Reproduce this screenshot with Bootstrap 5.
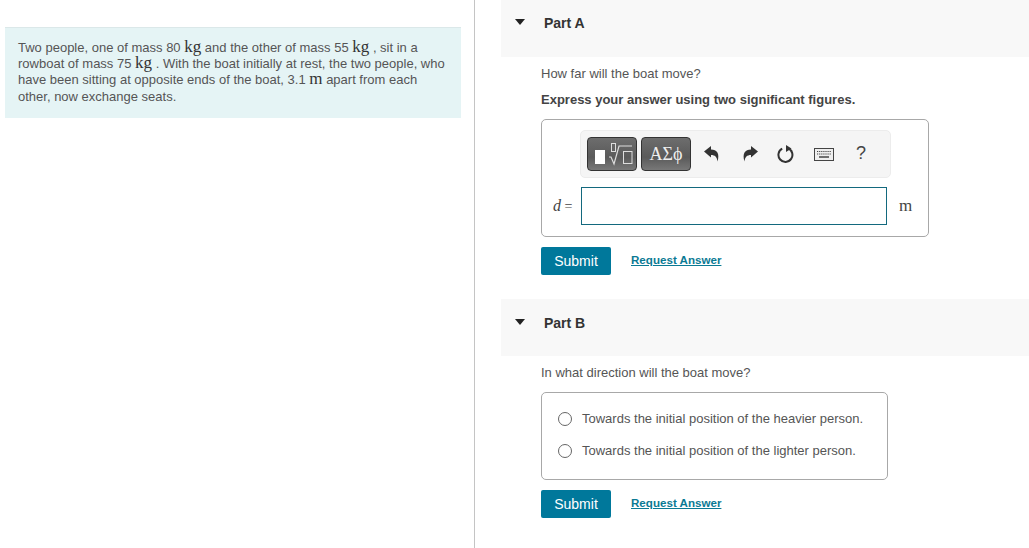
<!DOCTYPE html>
<html lang="en">
<head>
<meta charset="utf-8">
<title>Part A and B</title>
<link href="https://cdn.jsdelivr.net/npm/bootstrap@5.3.0/dist/css/bootstrap.min.css" rel="stylesheet">
<style>
html,body{height:548px;overflow:hidden;background:#fff}
body{font-family:"Liberation Sans",Arial,sans-serif;font-size:13px;line-height:16px;color:#555}
.pane-left{width:475px;height:548px;border-right:1px solid #c4c4c4;padding:27px 13px 0 5px;flex:none}
.intro-box{background:#e5f4f5;border-top:1px solid #dbe8e9;height:91px;padding:12px 13px 0;width:456px}
.intro-box p{margin:0;font-size:13px;line-height:16.2px}
.unit-big{font-family:"Liberation Serif",serif;font-size:17px;line-height:0;color:#333}
.pane-right{width:554px;padding-left:26px;flex:none}
.part-band{background:#f8f8f8;height:57px;display:flex;align-items:flex-start;padding:15px 0 0 14px;font-size:14px;font-weight:700;color:#333;gap:19px;line-height:16px}
.caret-down{width:0;height:0;border-left:5.5px solid transparent;border-right:5.5px solid transparent;border-top:6px solid #222;margin-top:4px;display:block}
.part-body{padding-left:40px}
.q-text{margin:9px 0 0;height:16px}
.a-text{margin:10px 0 0;font-weight:700;color:#444}
.answer-box{width:388px;height:118px;border:1px solid #a8a8a8;border-radius:5px;margin-top:11px;padding:10px 0 0 0}
.math-bar{margin-left:38px;width:311px;height:48px;background:#f5f5f5;border:1px solid #ececec;border-radius:5px;display:flex;align-items:center;padding-left:6px}
.tool-btn{height:34px;border:1px solid #333;border-radius:4px;background:linear-gradient(#6d6d6d,#5a5a5a 60%,#787878);color:#fff;display:flex;align-items:center;justify-content:center;padding:0}
.tb-a{width:50px;margin-right:4px}
.tb-b{width:50px;font-family:"Liberation Serif",serif;font-size:18px;color:#eee;font-weight:400}
.ico-slot{display:flex;align-items:center;justify-content:center}
.help-mark{width:38px;font-size:18px;color:#444;padding-bottom:2px}
.input-row{display:flex;align-items:center;margin-top:9px}
.d-label{width:39px;padding-left:11px;font-family:"Liberation Serif",serif;font-size:14px;color:#444;white-space:nowrap}
.d-label i{font-size:16px}
.ans-input{width:306px;height:38px;border:1px solid #13697e;border-radius:0;background:#fff;padding:0}
.unit-after{font-family:"Liberation Serif",serif;font-size:17px;margin-left:12px;color:#444}
.action-row{display:flex;align-items:flex-start;gap:20px;margin-top:10px}
.submit-btn{background:#00789b;color:#fff;border:0;border-radius:2px;width:70px;height:28px;padding:0;font-size:14px;font-weight:400;line-height:28px;--bs-btn-hover-bg:#00789b;--bs-btn-hover-color:#fff}
.req-link{color:#0b7a94;font-size:11.6px;font-weight:700;text-decoration:underline;margin-top:5px}
.choice-box{width:347px;height:88px;border:1px solid #a8a8a8;border-radius:5px;margin-top:11px;padding:10px 0 0 16px}
.choice-row{display:flex;align-items:center;height:32px;gap:10px}
.radio-dot{width:14px;height:14px;border:1px solid #666;border-radius:50%;background:#fff;margin:0;flex:none;appearance:none}
</style>
</head>
<body>
<div class="d-flex">
  <div class="pane-left">
    <div class="intro-box">
      <p>Two people, one of mass 80 <span class="unit-big">kg</span> and the other of mass 55 <span class="unit-big">kg</span> , sit in a rowboat of mass 75 <span class="unit-big">kg</span> . With the boat initially at rest, the two people, who have been sitting at opposite ends of the boat, 3.1 <span class="unit-big">m</span> apart from each other, now exchange seats.</p>
    </div>
  </div>
  <div class="pane-right">
    <div class="part-band"><span class="caret-down"></span><span>Part A</span></div>
    <div class="part-body">
      <p class="q-text">How far will the boat move?</p>
      <p class="a-text">Express your answer using two significant figures.</p>
      <div class="answer-box">
        <div class="math-bar">
          <button type="button" class="tool-btn tb-a" aria-label="Templates">
            <svg width="48" height="32" viewBox="0 0 48 32"><rect x="7" y="12" width="10" height="14" fill="#fff"/><rect x="23.500" y="5.500" width="4" height="8" fill="none" stroke="#ddd"/><path d="M21 19h2l3 7 5-18h13" fill="none" stroke="#ddd" stroke-width="1.200"/><rect x="35.500" y="13.500" width="8.500" height="12" fill="none" stroke="#ddd"/></svg>
          </button>
          <button type="button" class="tool-btn tb-b">ΑΣϕ</button>
          <span class="ico-slot" style="width:42px">
            <svg width="16" height="16" viewBox="0 0 16 16"><path d="M0 5.500 7 0V3.500C13 3.500 16 7.500 13.500 15.500 13 11 11 9 7 9V11.500z" fill="#333"/></svg>
          </span>
          <span class="ico-slot" style="width:34px">
            <svg width="16" height="16" viewBox="0 0 16 16"><path d="M16 5.500 9 0V3.500C3 3.500 0 7.500 2.500 15.500 3 11 5 9 9 9V11.500z" fill="#333"/></svg>
          </span>
          <span class="ico-slot" style="width:38px">
            <svg width="18" height="19" viewBox="0 0 18 19"><path d="M11 3.400a7 7 0 1 1-5.800.3" fill="none" stroke="#333" stroke-width="2"/><path d="M9 0v7l5.500-3.500z" fill="#333"/></svg>
          </span>
          <span class="ico-slot" style="width:37px">
            <svg width="20" height="13" viewBox="0 0 20 13"><rect x=".5" y=".5" width="19" height="12" fill="#eee" stroke="#444"/><path d="M3 3.500h14M3 6h14" stroke="#444" stroke-width="1.200" stroke-dasharray="1.200 .9"/><path d="M5 9h10" stroke="#444" stroke-width="1.500"/></svg>
          </span>
          <span class="ico-slot help-mark">?</span>
        </div>
        <div class="input-row">
          <span class="d-label"><i>d</i> =</span>
          <input class="ans-input" type="text" aria-label="d">
          <span class="unit-after">m</span>
        </div>
      </div>
      <div class="action-row">
        <button type="button" class="btn submit-btn">Submit</button>
        <a href="#" class="req-link">Request Answer</a>
      </div>
    </div>
    <div class="part-band mt-4 pt-3" ><span class="caret-down"></span><span>Part B</span></div>
    <div class="part-body">
      <p class="q-text">In what direction will the boat move?</p>
      <div class="choice-box">
        <div class="choice-row"><input class="radio-dot" type="radio" name="dir" aria-label="heavier"><span>Towards the initial position of the heavier person.</span></div>
        <div class="choice-row"><input class="radio-dot" type="radio" name="dir" aria-label="lighter"><span>Towards the initial position of the lighter person.</span></div>
      </div>
      <div class="action-row">
        <button type="button" class="btn submit-btn">Submit</button>
        <a href="#" class="req-link">Request Answer</a>
      </div>
    </div>
  </div>
</div>
<script src="https://cdn.jsdelivr.net/npm/bootstrap@5.3.0/dist/js/bootstrap.bundle.min.js"></script>
</body>
</html>
